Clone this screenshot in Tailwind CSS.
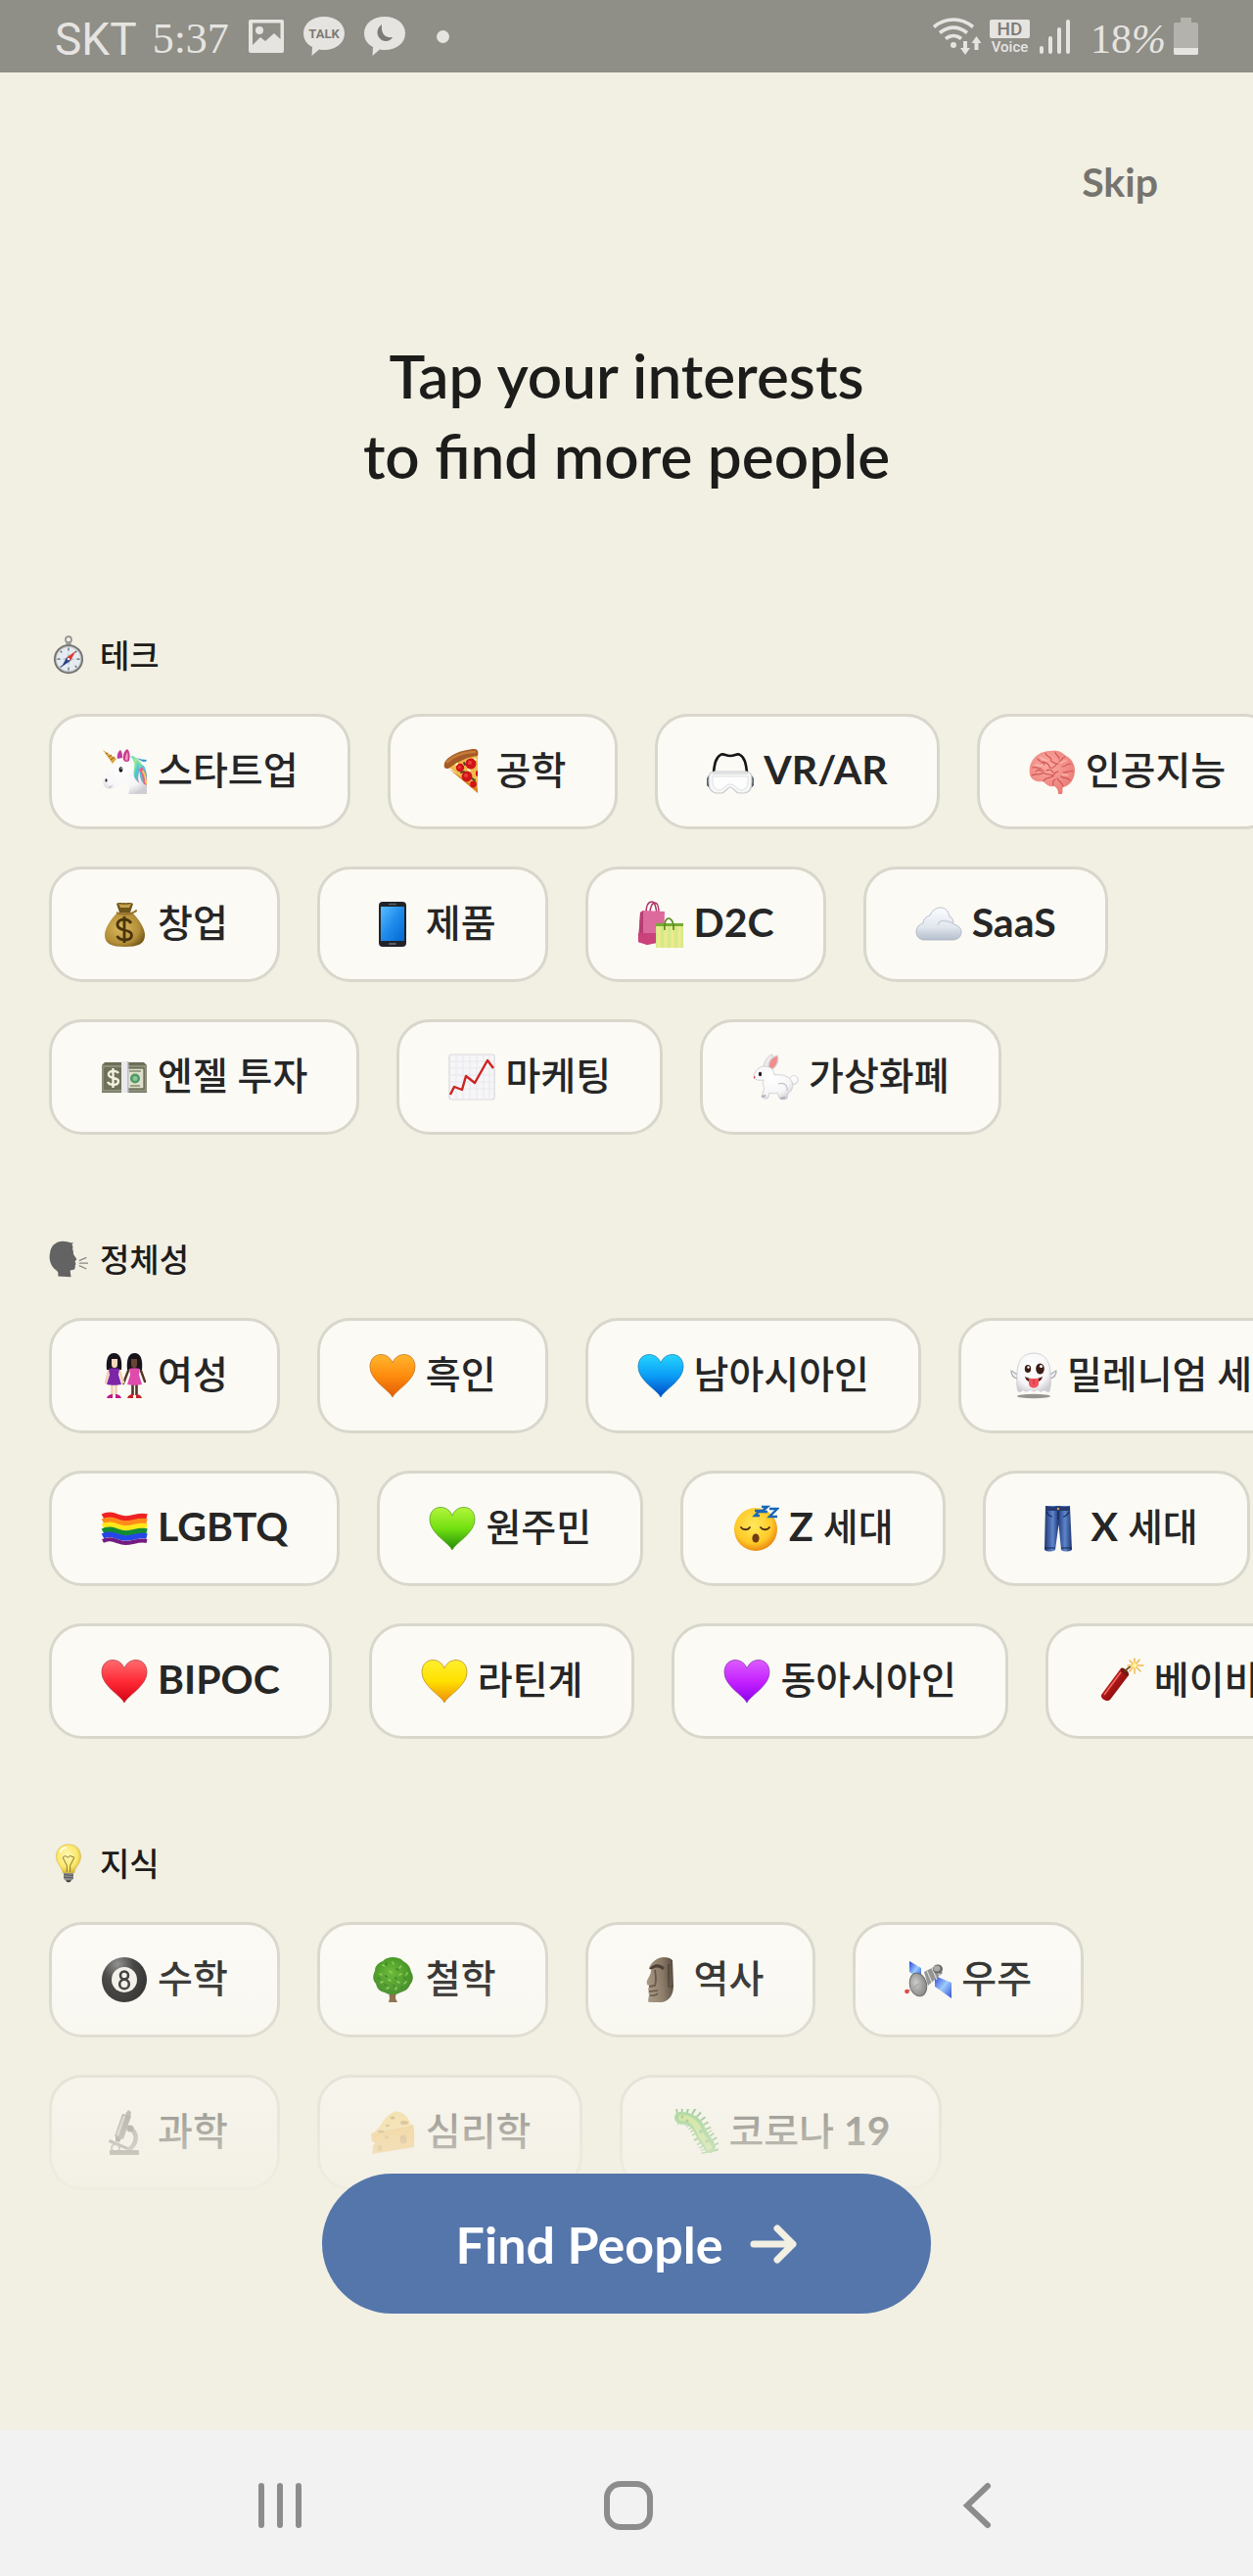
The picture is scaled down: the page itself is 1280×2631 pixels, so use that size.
<!DOCTYPE html>
<html lang="ko">
<head>
    <meta charset="UTF-8">
    <meta name="viewport" content="width=device-width, initial-scale=1.0">
    <title>Tap your interests</title>
    <script src="https://cdn.jsdelivr.net/npm/@tailwindcss/browser@4"></script>
    <style>
        body {
            font-family: 'Lato', 'Noto Sans CJK KR', sans-serif;
        }
    </style>
</head>
<body class="flex min-h-screen flex-col bg-[#f2efe3] text-[#1c1c1a]">

    <!-- 이모지 모음 -->
    <svg class="absolute h-0 w-0" aria-hidden="true">
        <defs>
            <linearGradient id="g-orange" x1="0" y1="0" x2="0" y2="1"><stop offset="0" stop-color="#ffb52e"/><stop offset=".5" stop-color="#ff8c0d"/><stop offset="1" stop-color="#e05a06"/></linearGradient>
            <linearGradient id="g-blue" x1="0" y1="0" x2="0" y2="1"><stop offset="0" stop-color="#25d4ff"/><stop offset=".5" stop-color="#0a9df5"/><stop offset="1" stop-color="#0547c4"/></linearGradient>
            <linearGradient id="g-green" x1="0" y1="0" x2="0" y2="1"><stop offset="0" stop-color="#b4f53c"/><stop offset=".5" stop-color="#72e010"/><stop offset="1" stop-color="#1f8a0c"/></linearGradient>
            <linearGradient id="g-red" x1="0" y1="0" x2="0" y2="1"><stop offset="0" stop-color="#ff6b6e"/><stop offset=".5" stop-color="#ff2b36"/><stop offset="1" stop-color="#d60012"/></linearGradient>
            <linearGradient id="g-yellow" x1="0" y1="0" x2="0" y2="1"><stop offset="0" stop-color="#fff02e"/><stop offset=".5" stop-color="#ffe000"/><stop offset="1" stop-color="#f08c0a"/></linearGradient>
            <linearGradient id="g-purple" x1="0" y1="0" x2="0" y2="1"><stop offset="0" stop-color="#dc5cff"/><stop offset=".5" stop-color="#c522ff"/><stop offset="1" stop-color="#8a00ee"/></linearGradient>
            <linearGradient id="g-phone" x1="0" y1="0" x2="1" y2="1"><stop offset="0" stop-color="#5bbcff"/><stop offset=".5" stop-color="#1f8cec"/><stop offset="1" stop-color="#0367cf"/></linearGradient>
            <linearGradient id="g-cloud" x1="0" y1="0" x2="0" y2="1"><stop offset="0" stop-color="#fbfcfe"/><stop offset=".6" stop-color="#e2e7ef"/><stop offset="1" stop-color="#b4becb"/></linearGradient>
            <linearGradient id="g-mane" x1="0" y1="0" x2="1" y2="1"><stop offset="0" stop-color="#5bd8d8"/><stop offset=".35" stop-color="#a4e88e"/><stop offset=".6" stop-color="#45c8d8"/><stop offset="1" stop-color="#f0789c"/></linearGradient>
            <linearGradient id="g-jeans" x1="0" y1="0" x2="1" y2="0"><stop offset="0" stop-color="#20366f"/><stop offset=".3" stop-color="#5d86cc"/><stop offset=".5" stop-color="#233c7c"/><stop offset=".75" stop-color="#5d86cc"/><stop offset="1" stop-color="#20366f"/></linearGradient>
            <linearGradient id="g-tube" x1="0" y1="0" x2="1" y2="1"><stop offset="0" stop-color="#e03a32"/><stop offset=".5" stop-color="#a81415"/><stop offset="1" stop-color="#5c0a08"/></linearGradient>
            <linearGradient id="g-panel" x1="0" y1="0" x2="1" y2="1"><stop offset="0" stop-color="#1b2fe0"/><stop offset=".5" stop-color="#8ec8ff"/><stop offset="1" stop-color="#1533d8"/></linearGradient>
            <linearGradient id="g-stone" x1="0" y1="0" x2="1" y2="0"><stop offset="0" stop-color="#a08e78"/><stop offset=".6" stop-color="#7d6b58"/><stop offset="1" stop-color="#473b2f"/></linearGradient>
            <radialGradient id="g-white" cx=".45" cy=".35" r=".7"><stop offset="0" stop-color="#ffffff"/><stop offset=".7" stop-color="#f6f5f7"/><stop offset="1" stop-color="#cfced4"/></radialGradient>
            <radialGradient id="g-brain" cx=".4" cy=".35" r=".8"><stop offset="0" stop-color="#fba9a2"/><stop offset="1" stop-color="#e8746f"/></radialGradient>
            <radialGradient id="g-gold" cx=".4" cy=".45" r=".65"><stop offset="0" stop-color="#dcb95c"/><stop offset=".7" stop-color="#b28e38"/><stop offset="1" stop-color="#775a19"/></radialGradient>
            <radialGradient id="g-face" cx=".45" cy=".4" r=".6"><stop offset="0" stop-color="#ffe95a"/><stop offset=".7" stop-color="#ffc928"/><stop offset="1" stop-color="#ea8b12"/></radialGradient>
            <radialGradient id="g-ball" cx=".35" cy=".15" r=".9"><stop offset="0" stop-color="#8a8a8a"/><stop offset=".4" stop-color="#3a3a3a"/><stop offset="1" stop-color="#141414"/></radialGradient>
            <radialGradient id="g-bulb" cx=".45" cy=".4" r=".6"><stop offset="0" stop-color="#fff9b8"/><stop offset=".7" stop-color="#fbe768"/><stop offset="1" stop-color="#d9b93e"/></radialGradient>
            <radialGradient id="g-leaf" cx=".45" cy=".4" r=".6"><stop offset="0" stop-color="#5fb52a"/><stop offset="1" stop-color="#2f8213"/></radialGradient>
            <radialGradient id="g-dish" cx=".4" cy=".4" r=".7"><stop offset="0" stop-color="#c8c8c8"/><stop offset="1" stop-color="#6d6d6d"/></radialGradient>
        </defs>

        <symbol id="compass" viewBox="0 0 48 48">
            <circle cx="24" cy="5" r="3.6" fill="none" stroke="#8f8f8f" stroke-width="2"/>
            <path d="M21 8h6v4h-6z" fill="#9a9a98"/>
            <circle cx="24" cy="29" r="18" fill="#6f6f6d"/>
            <circle cx="24" cy="29" r="16" fill="#b9bcbe"/>
            <circle cx="24" cy="29" r="14.6" fill="#e4ebf1"/>
            <path d="M24 15v4M24 39v4M10 29h4M34 29h4M14 19l2 2M34 19l-2 2M14 39l2-2M34 39l-2-2" stroke="#5b6570" stroke-width="1.4"/>
            <path d="M24 21l2 6 6 2-6 2-2 6-2-6-6-2 6-2z" fill="#b8c4ce"/>
            <path d="M33 19l-6.500 12-4.500-4z" fill="#d93830"/>
            <path d="M15 39l6.800-12 4.700 4z" fill="#2c3f87"/>
            <circle cx="24" cy="29" r="1.400" fill="#fff"/>
        </symbol>

        <symbol id="unicorn" viewBox="0 0 48 48">
            <path d="M26 8c6-1 13 3 16 9 3 1 4 5 5 10v17h-3c-2-7-9-12-11-18z" fill="url(#g-mane)"/>
            <path d="M36 10c4 1 7 2 11 2l-1 2c-2 0-4 0-5-1z" fill="#3c9bd0"/>
            <path d="M42 19c4 6 5 15 5 23l-3-2c0-8-2-13-5-18z" fill="#e85f8c"/>
            <path d="M43 22c3 5 4 10 4 16l-2-3c0-5-1-8-3-11z" fill="#f5d34f"/>
            <path d="M14 12c5-4 12-6 17-3 7 4 8 13 9 20 1 5 3 8 7 9v9H28c2-5 1-9-3-11-4 0-7 2-10 4-4 3-10 2-12-2-2-5 1-9 4-13 2-5 3-9 7-13z" fill="url(#g-white)"/>
            <path d="M33 8c4 2 6 7 6 12 1 7-3 10 1 16-7-4-7-10-6-15 1-6-1-9-3-12z" fill="url(#g-mane)"/>
            <path d="M17 11c-1-4 1-8 3-9 2 2 2 5 2 8z" fill="#c23ba0"/>
            <path d="M23 12c-1-5 1-9 4-11 3 3 3 8 2 12-2 2-5 1-6-1z" fill="#c83e8c"/>
            <path d="M25 12c0-4 1-6 2-8 1 3 1 6 0 9z" fill="#f59cc0"/>
            <path d="M2 2l14 9-4 5z" fill="#d9a441"/>
            <path d="M5 6l2-1M8 9l3-2M10 12l4-3" stroke="#8f621a" stroke-width="1"/>
            <ellipse cx="20.500" cy="22" rx="1.900" ry="2.800" fill="#1d1512"/>
            <circle cx="21" cy="21" r=".8" fill="#fff"/>
            <ellipse cx="5.500" cy="33" rx="1.100" ry="1.700" fill="#332a2e"/>
            <path d="M8 40c2 0 3-1 4-2" stroke="#b9a9bd" stroke-width="1" fill="none"/>
        </symbol>

        <symbol id="pizza" viewBox="0 0 48 48">
            <path d="M8 18L39 6v40z" fill="#f0bb4a"/>
            <path d="M9 21l30 25v-5z" fill="#d88a28"/>
            <path d="M5 20C4 15 6 12 12 8 20 3 30 1 36 1c3 0 4 3 3 7-9 1-19 5-27 11-2 2-5 3-7 1z" fill="#a55b26"/>
            <path d="M8 14C16 7 26 4 36 4" fill="none" stroke="#c47c3d" stroke-width="2.500" stroke-linecap="round"/>
            <circle cx="32" cy="16" r="5.500" fill="#d0141a"/><circle cx="21" cy="20" r="4.200" fill="#d0141a"/><circle cx="28" cy="29" r="5.400" fill="#cf1519"/><circle cx="34.500" cy="37" r="3.400" fill="#cf1519"/>
            <path d="M37 24l2-1v6l-2-1z" fill="#cf1519"/>
            <circle cx="31" cy="15" r="2" fill="#e8443a"/><circle cx="27" cy="28" r="2" fill="#e8443a"/><circle cx="20.500" cy="19.500" r="1.500" fill="#e8443a"/>
            <path d="M22 25l3-1M33 31l3 2M26 17l-1-2" stroke="#4a3a20" stroke-width="1.800" stroke-linecap="round"/>
            <path d="M29 22l2 1M17 17l1-1M36 11l1 1" stroke="#fdf0b8" stroke-width="2" stroke-linecap="round"/>
        </symbol>

        <symbol id="goggles" viewBox="0 0 48 48">
            <path d="M7 25C8 16 9 10 14 7c3-2 5 1 10 1s7-3 10-1c5 3 6 9 7 18" fill="none" stroke="#151515" stroke-width="2.600" stroke-linecap="round"/>
            <path d="M3 28l-2 3v7l3 3M45 28l2 3v7l-3 3" fill="#2a363f" stroke="#24303a" stroke-width="1.500"/>
            <path d="M8 24h32c4 0 6 3 6 7v4c0 6-2 10-7 11h-6c-4 0-6-6-9-6s-5 6-9 6H9c-5-1-7-5-7-11v-4c0-4 2-7 6-7z" fill="#f5f6f6" stroke="#c7cacc" stroke-width="1.200"/>
            <path d="M6 29h36v5c0 5-2 8-6 9-5 0-7-6-12-6s-7 6-12 6c-4-1-6-4-6-9z" fill="#fdfdfd" stroke="#e0e2e3" stroke-width="1"/>
            <path d="M6 26h36" stroke="#d8dadb" stroke-width="1.500"/>
        </symbol>

        <symbol id="brain" viewBox="0 0 48 48">
            <path d="M1 27C-1 14 8 3 22 3c7-2 13 2 16 5 6 3 9 9 9 15 0 8-5 16-12 17-1 1 0 4-1 7h-4c0-4-1-6-4-8-5 1-8-1-11-5-5 1-12 0-14-7z" fill="url(#g-brain)"/>
            <path d="M4 20c4-2 5 2 9 1M9 11c2 4 6 2 7 6M17 5c0 4 5 3 6 7M27 4c0 4 4 3 4 7M37 9c-4 1-3 4-6 5M43 16c-5 0-5 3-9 3M45 24c-4-2-7 2-10 1M42 33c-3-4-6-1-9-4M35 39c-1-4-4-4-6-8M3 28c4-3 8 1 12-3 3 4 8 0 10 4M15 34c1-4 6-3 9-5 2-1 2-5 6-5M13 15c3-2 7 1 8 4s5 1 7-2M22 13c3 1 4 4 8 3M18 23c3-2 6 0 7 2M25 38c-1-3 0-5 2-6M7 24c2-3 5 0 8-1" fill="none" stroke="#cf5753" stroke-width="1.200" stroke-linecap="round"/>
            <path d="M6 18c3-2 5 1 7 0M11 9c2 3 5 2 7 4M38 13c-3 0-4 2-6 2M40 28c-3-1-4-1-6-1" fill="none" stroke="#ffc9c3" stroke-width="1" stroke-linecap="round"/>
        </symbol>

        <symbol id="moneybag" viewBox="0 0 48 48">
            <path d="M16 3c3-2 5 0 8-1 3 1 6-1 9 1l-3 9H19z" fill="#6f541a"/>
            <path d="M18 3c2 1 10 1 13 0l-2 4h-9z" fill="#c3a14c"/>
            <path d="M17 12h15c7 7 13 16 13 23 0 9-7 12-20.500 12S4 44 4 35c0-7 6-16 13-23z" fill="url(#g-gold)"/>
            <path d="M16 11c4 2 12 2 17 0l3-2c2 0 1 3-1 3-6 4-14 3-19 1z" fill="#94722a"/>
            <path d="M31 23c-2-3-5-4-7-4-4 0-7 2-7 5.500 0 7 14.500 4 14.500 10.500 0 3.500-3 5-7 5-3 0-6-1-8-4M24 16v27" fill="none" stroke="#49340c" stroke-width="2.800"/>
        </symbol>

        <symbol id="phone" viewBox="0 0 48 48">
            <rect x="10" y="1" width="28" height="46" rx="4" fill="#20242a"/>
            <rect x="12" y="6" width="24" height="35" fill="url(#g-phone)"/>
            <path d="M20 3.500h8" stroke="#59616b" stroke-width="1.400"/>
            <rect x="20" y="43" width="8" height="2" rx="1" fill="#59616b"/>
        </symbol>

        <symbol id="bags" viewBox="0 0 48 48">
            <path d="M9 13c0-7 2-12 6-12 3 0 4 5 5 12M13 13c0-6 2-11 5-11s4 5 4 11" fill="none" stroke="#b03565" stroke-width="1.500"/>
            <path d="M3 12l3-2 22 1-1 31-17 3-9-3z" fill="#dd6a9c"/>
            <path d="M3 12l3-2v33l-5-1z" fill="#b83c74"/>
            <path d="M1 33h26v8l-17 4-9-3z" fill="#c9427a"/>
            <rect x="19" y="23" width="28" height="25" fill="#d3ea8b"/>
            <path d="M22 23v25M29 23v25M36 23v25M43 23v25" stroke="#f1e98d" stroke-width="3"/>
            <path d="M19 23h28v3H19z" fill="#74ab34"/>
            <path d="M28 30c-1-7 1-12 4-12s6 5 5 12" fill="none" stroke="#5a8d22" stroke-width="1.700"/>
        </symbol>

        <symbol id="cloud" viewBox="0 0 48 48">
            <path d="M9 40C4 40 1 36 1 32c0-5 3-8 7-9 0-4 3-7 7-8 2-5 6-8 11-8s8 4 9 9c3 1 4 4 4 8 5 1 8 4 8 8 0 5-4 8-9 8z" fill="url(#g-cloud)" stroke="#a8b2bf" stroke-width=".8"/>
            <path d="M23 25c1-4 5-6 9-4 3 1 4 0 6 2" fill="none" stroke="#c9d1dc" stroke-width="1.500"/>
        </symbol>

        <symbol id="cash" viewBox="0 0 48 48">
            <path d="M1 12l3-3h40l3 3v28H1z" fill="#6d6e56"/>
            <rect x="1" y="12" width="46" height="27" fill="#8d907a"/>
            <rect x="4" y="15" width="40" height="21" fill="#dfe0cb" stroke="#5c5f48" stroke-width="1.200"/>
            <path d="M4 15h17v21H4z" fill="#6f7258"/>
            <path d="M18 20c-2-3-11-3-10 2 1 4 9 2 10 6 0 5-9 5-11 1M12.500 15v20" stroke="#f3f1df" stroke-width="2.400" fill="none"/>
            <circle cx="35" cy="25.500" r="5" fill="#4d9a66"/><circle cx="35" cy="25.500" r="2.500" fill="#8cc49b"/>
            <path d="M29 18h12M30 33h10" stroke="#858a70" stroke-width="1.500"/>
            <rect x="21" y="8" width="7" height="32" fill="#e9e9ee"/>
            <path d="M27 8h1.500v32H27z" fill="#bebfc8"/>
        </symbol>

        <symbol id="chart" viewBox="0 0 48 48">
            <rect x="1" y="1" width="46" height="46" rx="2" fill="#f6f6f8" stroke="#d9d9de" stroke-width="1.200"/>
            <path d="M1 8h46M1 15h46M1 22h46M1 29h46M1 36h46M8 1v46M15 1v46M22 1v46M29 1v46M36 1v46M42 1v46" stroke="#e6e6eb" stroke-width=".8"/>
            <path d="M2 42l4-8 8 3 4-14 9 7L40 7l6 8" fill="none" stroke="#cc2420" stroke-width="2.400" stroke-linejoin="round"/>
        </symbol>

        <symbol id="rabbit" viewBox="0 0 48 48">
            <circle cx="43" cy="27" r="4.500" fill="url(#g-white)" stroke="#cfcdd0" stroke-width=".7"/>
            <path d="M12 13c1-6 5-11 9-12 2 4 1 11-3 15z" fill="#eceaec" stroke="#c4c2c6" stroke-width=".7"/>
            <path d="M17 14c0-6 3-10 9-12 2 4 0 11-5 14z" fill="#f38c8e" stroke="#d4d0d3" stroke-width="1.200"/>
            <path d="M2 23c1-6 6-10 11-10 6 0 10 4 10 9 6-1 13 0 17 5 4 6 1 11-3 14l-1 5c-3 2-7 1-8-1l-2-5c-3 1-6 1-8 0l-1 5c-2 2-6 1-7-1l3-9c-2-2-2-5-1-8-5 1-10 0-10-4z" fill="url(#g-white)" stroke="#cbc9cd" stroke-width=".8"/>
            <path d="M27 31c5-2 10 1 9 7" fill="none" stroke="#c6c3c8" stroke-width="1.200"/>
            <path d="M10 44l4-1M29 46l5-1" stroke="#aaa6ac" stroke-width="1.600"/>
            <ellipse cx="8.500" cy="21" rx="1.600" ry="2.200" fill="#201a1a"/>
            <path d="M2 23l2 1-2 2z" fill="#d9474a"/>
        </symbol>

        <symbol id="speaking" viewBox="0 0 48 48">
            <path d="M28 6c2 2 1 4 1 6 1 2 1 4 1 6l4 6c0 2-2 1-2 3l1 3-1 2c1 6-3 5-6 6l1 8-16-1c1-4 0-6-3-8C2 32 0 25 1 18 2 7 9 2 17 2c5 0 8 2 13 2z" fill="#636363"/>
            <path d="M37 26l9-4M37 29h11M37 32l9 4" stroke="#8b8a85" stroke-width="1.500"/>
        </symbol>

        <symbol id="women" viewBox="0 0 48 48">
            <path d="M28 19l-5 13M41 19l4 11" fill="none" stroke-width="2.400" stroke-linecap="round" stroke="#553526"/>
            <path d="M8 19L5 31M19 19l4 12" fill="none" stroke-width="2.400" stroke-linecap="round" stroke="#f3cdb0"/>
            <path d="M11.500 31v13M15.500 31v13" stroke="#f3cdb0" stroke-width="2.600"/>
            <path d="M32.500 31v13M36.500 31v13" stroke="#553526" stroke-width="2.600"/>
            <path d="M6 18C5 8 7 1 13.500 1S22 8 21 18z" fill="#17141c"/>
            <path d="M27 18c-1-10 1-17 7.500-17S43 8 42 18z" fill="#17141c"/>
            <path d="M11 7h6v5c0 3-1 4-3 4s-3-1-3-4z" fill="#f8d8bd"/>
            <path d="M31 7h6v5c0 3-1 4-3 4s-3-1-3-4z" fill="#6a4433"/>
            <path d="M8 17c4-1 7-1 11 0l-1 6 3 10c-4 1-11 1-15 0l3-10z" fill="#7d25a8"/>
            <path d="M29 17c4-1 7-1 11 0l-1 6 3 10c-4 1-11 1-15 0l3-10z" fill="#e04bac"/>
            <path d="M6 47c1-3 3-4 6-4v4zM15 43c3 0 5 1 6 4h-6z" fill="#c0188a"/>
            <path d="M27 47c1-3 3-4 6-4v4zM36 43c3 0 5 1 6 4h-6z" fill="#c2222a"/>
        </symbol>

        <!-- 하트는 색만 다르다 -->
        <path id="heart-shape" d="M24 46C21 39 1 29 1 15 1 7 6 2.500 12 2.500c6 0 10 3.500 12 8.500 2-5 6-8.500 12-8.500 6 0 11 4.500 11 12.500 0 14-20 24-23 31z"/>
        <symbol id="heart-orange" viewBox="0 0 48 48"><use href="#heart-shape" fill="url(#g-orange)" stroke="#c9741e" stroke-width=".8"/></symbol>
        <symbol id="heart-blue" viewBox="0 0 48 48"><use href="#heart-shape" fill="url(#g-blue)" stroke="#1a82b8" stroke-width=".8"/></symbol>
        <symbol id="heart-green" viewBox="0 0 48 48"><use href="#heart-shape" fill="url(#g-green)" stroke="#5da024" stroke-width=".8"/></symbol>
        <symbol id="heart-red" viewBox="0 0 48 48"><use href="#heart-shape" fill="url(#g-red)" stroke="#b84044" stroke-width=".8"/></symbol>
        <symbol id="heart-yellow" viewBox="0 0 48 48"><use href="#heart-shape" fill="url(#g-yellow)" stroke="#c0922c" stroke-width=".8"/></symbol>
        <symbol id="heart-purple" viewBox="0 0 48 48"><use href="#heart-shape" fill="url(#g-purple)" stroke="#8c3cb4" stroke-width=".8"/></symbol>

        <symbol id="ghost" viewBox="0 0 48 48">
            <ellipse cx="24" cy="45" rx="17" ry="2.200" fill="#96948f"/>
            <path d="M7 27c-4-1-6-4-6-8 2 0 3 3 7 4zM41 27c4-1 6-4 6-8-2 0-3 3-7 4z" fill="#eeedf0" stroke="#a9a8ae" stroke-width="1.200"/>
            <path d="M8 40c-2-6-1-12-1-18C7 9 13 1 24 1s17 8 17 21c0 6 1 12-1 18-3 2-4-2-6-1s-3 2-5 0-3 1-5 1-3-3-5-1-3 1-5 0-3 3-6 1z" fill="url(#g-white)" stroke="#c9c7ce" stroke-width=".8"/>
            <ellipse cx="18" cy="17" rx="3.200" ry="4" fill="#3a1d16"/><ellipse cx="30.500" cy="17" rx="4.300" ry="5.600" fill="#3a1d16"/>
            <circle cx="18.500" cy="15.500" r="1.200" fill="#fff"/><circle cx="31.500" cy="14.500" r="1.600" fill="#fff"/>
            <path d="M15 25c6 3 12 3 18 0-1 4-4 6-9 6s-8-2-9-6z" fill="#542018"/>
            <path d="M19 27h10v5c0 6-10 6-10 0z" fill="#f0535c"/><path d="M24 28v5" stroke="#c8303c" stroke-width="1"/>
        </symbol>

        <symbol id="flag" viewBox="0 0 48 48">
            <g fill="none" stroke-width="5.600">
                <path d="M2 12c9-5 15 2 23 2s14-4 22-2" stroke="#ee2222"/>
                <path d="M2 17c9-5 15 2 23 2s14-4 22-2" stroke="#ff8c1a"/>
                <path d="M2 22c9-5 15 2 23 2s14-4 22-2" stroke="#ffe71a"/>
                <path d="M2 27c9-5 15 2 23 2s14-4 22-2" stroke="#138a34"/>
                <path d="M2 32c9-5 15 2 23 2s14-4 22-2" stroke="#2647e8"/>
                <path d="M2 37c9-5 15 2 23 2s14-4 22-2" stroke="#741a80" stroke-width="4"/>
            </g>
        </symbol>

        <symbol id="sleeping" viewBox="0 0 48 48">
            <circle cx="24" cy="25" r="22" fill="url(#g-face)"/>
            <path d="M9 23c2 3 7 3 9 0M29 23c2 3 7 3 9 0" fill="none" stroke="#4d2b0e" stroke-width="1.800" stroke-linecap="round"/>
            <ellipse cx="24" cy="34" rx="3.600" ry="4.600" fill="#6d3a12"/>
            <path d="M23 6h5l-5 5h5M30 2h6l-6 5h6M38 4h8l-8 8h8" fill="none" stroke="#1767b5" stroke-width="2.400"/>
        </symbol>

        <symbol id="jeans" viewBox="0 0 48 48">
            <path d="M11 1h25l2 45c-3 2-8 2-11 0L24.500 20 21 46c-3 2-8 2-11 0z" fill="url(#g-jeans)"/>
            <path d="M11 2h25v4H11z" fill="#263a70"/>
            <path d="M24 6v9M12 7c2 4 4 5 6 5M35 7c-2 4-4 5-6 5M10 44h11M27 44h11" fill="none" stroke="#17264f" stroke-width="1.100"/>
            <circle cx="24" cy="4" r="1.200" fill="#d2a04a"/>
        </symbol>

        <symbol id="dynamite" viewBox="0 0 48 48">
            <path d="M24 11l8 7L13 43c-3 3-10-1-9-5z" fill="url(#g-tube)"/>
            <path d="M24 11c2-2 9 3 8 7-2 2-9-4-8-7z" fill="#6d1b10"/>
            <path d="M28 14c2-2 4-4 6-5" stroke="#6a4a20" stroke-width="1.800" fill="none"/>
            <path d="M24 15L7 38" stroke="#ef6c60" stroke-width="1.500"/>
            <circle cx="38" cy="8" r="3.500" fill="#fff2a8"/>
            <path d="M38 1v4M38 11v5M31 8h4M41 8h6M33 3l3 3M40 10l4 4M43 2l-3 4M33 14l3-4" stroke="#f2b94a" stroke-width="1.500" stroke-linecap="round"/>
        </symbol>

        <symbol id="bulb" viewBox="0 0 48 48">
            <path d="M24 1c10 0 15 7 15 15 0 9-7 12-8 20H17c-1-8-8-11-8-20C9 8 14 1 24 1z" fill="url(#g-bulb)" stroke="#d4b84c" stroke-width=".8"/>
            <path d="M17 17l5 10v8M31 17l-5 10v8M17 17l3-2 3 2 3-2 5 2" fill="none" stroke="#8a7730" stroke-width="1.200"/>
            <path d="M18 36h12v7l-3 3c-2 1-4 1-6 0l-3-3z" fill="#8d8d8d"/>
            <path d="M18 38l12 1M18 41l12 1" stroke="#565656" stroke-width="1.200"/>
            <path d="M21 45h6l-1 2h-4z" fill="#333"/>
            <path d="M14 10c1-3 4-5 7-5" stroke="#fffde4" stroke-width="2.500" fill="none" stroke-linecap="round"/>
        </symbol>

        <symbol id="eightball" viewBox="0 0 48 48">
            <circle cx="24" cy="24" r="23" fill="url(#g-ball)"/>
            <circle cx="24" cy="24" r="13" fill="#f3f1ea"/>
            <circle cx="24" cy="19.500" r="4" fill="none" stroke="#303030" stroke-width="2.600"/>
            <circle cx="24" cy="28.500" r="4.800" fill="none" stroke="#303030" stroke-width="2.600"/>
        </symbol>

        <symbol id="tree" viewBox="0 0 48 48">
            <path d="M20 34h8l-1 9 2 4h-9l1-4z" fill="#7d5a35"/>
            <path d="M24 1c5 0 8 1 11 4 5 3 7 6 8 11 3 5 2 9-1 13-2 5-6 7-10 8-5 3-11 3-16 0-5-1-8-4-9-9-4-4-3-9-1-13 0-5 3-8 8-10 3-3 6-4 10-4z" fill="url(#g-leaf)"/>
            <path d="M14 9l2 1M24 6l1 2M33 10l-2 2M11 18l2 1M21 15l2 2M31 19l2-1M39 17l-1 2M12 27l2-1M20 24l2 1M29 26l2 1M38 26l-2 2M18 33l2-1M27 34l1-2" stroke="#84cc46" stroke-width="1.600" stroke-linecap="round"/>
            <path d="M18 7l-1 2M28 13l2 1M9 22l2 1M17 20l1 1M27 22l1 1M36 22l1 1M16 29l2 1M25 30l1 1M33 32l1-1" stroke="#2f8213" stroke-width="1.800" stroke-linecap="round"/>
        </symbol>

        <symbol id="moai" viewBox="0 0 48 48">
            <path d="M12 12c3-7 9-11 15-11 4 0 7 1 9 3l1 26c0 9-4 16-12 17H12c-2-1 0-5 0-8-1-2 0-4-1-6l2-3c-3 0-4-2-3-5 2-5 4-6 4-11z" fill="url(#g-stone)"/>
            <path d="M12 13c5-6 11-6 16-1l-2 2c-4-3-7-3-10-1z" fill="#3d3024"/>
            <path d="M18 14c1 6 2 11 0 16l-6 1" fill="none" stroke="#564638" stroke-width="1.800"/>
            <path d="M12 36l9-1M13 40c4 1 6 0 8-2" fill="none" stroke="#4d3f31" stroke-width="1.500"/>
            <path d="M32 8v22c0 2 4 2 4-1" fill="none" stroke="#45382d" stroke-width="1.800"/>
        </symbol>

        <symbol id="satellite" viewBox="0 0 48 48">
            <path d="M5 5l12 7v12L5 16z" fill="url(#g-panel)"/>
            <path d="M31 20l17 7v16L31 31z" fill="url(#g-panel)"/>
            <path d="M20 16l14-7 5 8-15 13z" fill="#8b8b8b"/>
            <path d="M23 15l5 12M28 12l5 12M32 10l4 10" stroke="#d5d5d5" stroke-width="1.200"/>
            <ellipse cx="34" cy="13" rx="5" ry="4.500" fill="#5c5c5c"/><ellipse cx="33" cy="12.500" rx="3.500" ry="3" fill="#a4a4a4"/>
            <ellipse cx="14" cy="29" rx="8.500" ry="12" transform="rotate(-14 14 29)" fill="url(#g-dish)" stroke="#5b5b5b" stroke-width="1"/>
            <path d="M15 28L3 36" stroke="#9c9c9c" stroke-width="1.300"/><circle cx="2.500" cy="36" r="2.300" fill="#d8322c"/>
        </symbol>

        <symbol id="microscope" viewBox="0 0 48 48">
            <path d="M25 5l3-4 3 2-1 5z" fill="#777"/>
            <path d="M22 5l9 2-8 24-9-3z" fill="#666"/>
            <path d="M24 7l-7 20" stroke="#b5b5b5" stroke-width="2.500"/>
            <path d="M15 28l6 2-2 4-4-1z" fill="#444"/>
            <path d="M29 19c10 6 8 17-1 23" fill="none" stroke="#777" stroke-width="4.500"/>
            <circle cx="30" cy="20" r="3.500" fill="#505050"/>
            <path d="M9 31l19 8-1 3-19-8z" fill="#606060"/>
            <circle cx="15" cy="40" r="4" fill="none" stroke="#777" stroke-width="2"/>
            <rect x="9" y="42" width="30" height="5" rx="1" fill="#4c4c4c"/>
        </symbol>

        <symbol id="cheese" viewBox="0 0 48 48">
            <path d="M2 25C13 20 13 9 25 3c7-2 15 4 18 13z" fill="#f5cf6a"/>
            <path d="M2 25l43-9c2 8 1 15 1 23L3 46c2-6 0-6 1-9 3-1 3-3-1-4z" fill="#f3b23c"/>
            <ellipse cx="12" cy="23" rx="3.500" ry="1.600" fill="#b97e24"/><ellipse cx="36" cy="14" rx="4" ry="2" fill="#b97e24"/><ellipse cx="19" cy="17" rx="2" ry="1.300" fill="#b97e24"/><ellipse cx="24" cy="9" rx="2.500" ry="1.500" fill="#b97e24"/>
            <ellipse cx="35" cy="31" rx="3.500" ry="4.500" fill="#c2832a"/><ellipse cx="11" cy="40" rx="2.500" ry="3" fill="#c2832a"/><circle cx="18" cy="29" r="1.800" fill="#c2832a"/>
        </symbol>

        <symbol id="microbe" viewBox="0 0 48 48">
            <path d="M5 6C20 4 27 14 31 24c2 6 8 10 10 20" fill="none" stroke="#3c9e3c" stroke-width="21" stroke-dasharray="1.600 3"/>
            <path d="M9 9C21 9 27 16 30 24c2 6 7 9 9 15" fill="none" stroke="#4fb848" stroke-width="12" stroke-linecap="round"/>
            <path d="M10 9C20 9 26 16 29 24c2 6 7 9 9 15" fill="none" stroke="#a2dc50" stroke-width="6" stroke-linecap="round"/>
            <circle cx="11" cy="8" r="1.500" fill="#5a8a20"/><circle cx="16" cy="12" r="1.500" fill="#5a8a20"/><circle cx="30" cy="23" r="2" fill="#4aa85a"/><circle cx="36" cy="33" r="1.800" fill="#4aa85a"/>
        </symbol>
    </svg>

    <!-- 상태 표시줄 -->
    <header class="flex h-[74px] items-center justify-between bg-[#8f8e87] px-14 text-[#e6e4e1]">
        <div class="flex items-center gap-5">
            <div class="flex items-center gap-4 pt-1.5">
                <span class="font-['Roboto'] text-[46px] leading-none">SKT</span>
                <span class="font-['Liberation_Serif'] text-[44px] leading-none">5:37</span>
            </div>
            <svg class="h-9 w-9" viewBox="0 0 36 36" role="img" aria-label="사진">
                <path fill="currentColor" fill-rule="evenodd" d="M2 1h32q2 0 2 2v30q0 2-2 2H2q-2 0-2-2V3q0-2 2-2zM4 4.500V27l8-8 5 4 9-8 6.500 6V4.500z"/>
                <circle cx="11" cy="12" r="4" fill="currentColor"/>
            </svg>
            <svg class="h-10 w-[42px]" viewBox="0 0 42 40" role="img" aria-label="카카오톡">
                <path fill="currentColor" d="M21 0c12 0 21 7 21 17S33 34 21 34c-2 0-3 0-5-.5L8.500 40 9 31C3 28 0 23 0 17 0 7 9 0 21 0z"/>
                <text x="21" y="22" text-anchor="middle" font-family="Roboto" font-size="13" font-weight="700" fill="#7c7b75">TALK</text>
            </svg>
            <svg class="h-10 w-[42px]" viewBox="0 0 42 40" role="img" aria-label="방해 금지">
                <path fill="currentColor" d="M21 0c12 0 21 7 21 17S33 34 21 34c-2 0-3 0-5-.5L8.500 40 9 31C3 28 0 23 0 17 0 7 9 0 21 0z"/>
                <path fill="#7c7b75" d="M18 8c-1 9 3 14 11 13-2 4-7 5-11 3-6-4-6-12 0-16z"/>
            </svg>
            <span class="ml-3 h-[13px] w-[13px] rounded-full bg-current"></span>
        </div>
        <div class="flex items-center gap-2">
            <svg class="h-[38px] w-[50px]" viewBox="0 0 50 38" role="img" aria-label="와이파이">
                <g fill="none" stroke="currentColor" stroke-width="3.600">
                    <path d="M1 9.500c12-10 28-10 40 0M7 15.500c9-7 19-7 28 0M13 21.500c5-4 11-4 16 0"/>
                </g>
                <circle cx="21" cy="28" r="3" fill="currentColor"/>
                <path fill="currentColor" d="M31 24h4v7h3l-5 7-5-7h3zM42.500 33h4v-7h3l-5-7-5 7h3z"/>
            </svg>
            <svg class="h-[38px] w-[41px]" viewBox="0 0 41 38" role="img" aria-label="HD Voice">
                <rect y="2" width="41" height="19" rx="2" fill="currentColor"/>
                <text x="20.500" y="18" text-anchor="middle" font-family="Roboto" font-size="19" font-weight="500" fill="#7c7b75">HD</text>
                <text x="20.500" y="35" text-anchor="middle" font-family="Roboto" font-size="15" font-weight="500" fill="currentColor">Voice</text>
            </svg>
            <svg class="h-[38px] w-[34px]" viewBox="0 0 34 38" role="img" aria-label="신호">
                <path d="M4 31v4M13 21v14M22 12v23M31 4v31" stroke="currentColor" stroke-width="4" stroke-linecap="round"/>
            </svg>
            <span class="ml-3 pt-1.5 font-['Liberation_Serif'] text-[42px] leading-none">18<i>%</i></span>
            <svg class="h-[38px] w-[25px]" viewBox="0 0 25 38" role="img" aria-label="배터리">
                <path fill="#b3b2ad" d="M7 0h11v5h5q2 0 2 2v29q0 2-2 2H2q-2 0-2-2V7q0-2 2-2h5z"/>
                <path fill="currentColor" d="M0 31h25v5q0 2-2 2H2q-2 0-2-2z"/>
            </svg>
        </div>
    </header>

    <main class="relative flex-1 overflow-hidden pt-[86px]">
        <div class="flex justify-end pr-[97px]">
            <button type="button" class="text-[41px] leading-[52px] font-bold text-[#75746e]">Skip</button>
        </div>

        <h1 class="mt-[130px] text-center text-[62px] leading-[82px] font-semibold">Tap your interests<br>to find more people</h1>

        <div id="interest-list" class="mt-[143px] flex flex-col gap-[107px] pb-[245px]">
            <!-- JavaScript로 관심사 생성 -->
        </div>

        <!-- 아래쪽은 흐려지면서 버튼이 떠 있다 -->
        <div class="pointer-events-none absolute inset-x-0 bottom-0 flex h-[522px] items-start justify-center bg-[linear-gradient(to_bottom,#f2efe300_0px,#f2efe31a_60px,#f2efe347_120px,#f2efe37a_150px,#f2efe3a0_205px,#f2efe3e0_275px,#f2efe3_300px)] pt-[260px]">
            <button type="button" class="pointer-events-auto flex h-[143px] w-[622px] items-center justify-center gap-7 rounded-full bg-[#5576ab] text-[52px] font-bold text-white">
                Find People
                <svg class="h-10 w-12" viewBox="0 0 48 40" fill="none" stroke="#f2efe3" stroke-width="7" stroke-linecap="round" stroke-linejoin="round" aria-hidden="true">
                    <path d="M4 20h40M28 4l16 16-16 16"/>
                </svg>
            </button>
        </div>
    </main>

    <!-- 내비게이션 바 -->
    <nav class="flex h-[149px] items-center justify-around bg-[#f2f2f2] pt-1 pr-[104px] pl-[108px] text-[#8c8c8c]">
        <button type="button" aria-label="최근 앱">
            <svg class="h-[50px] w-[50px]" viewBox="0 0 50 50" fill="none" stroke="currentColor" stroke-width="6" stroke-linecap="round"><path d="M6 5v40M25 5v40M44 5v40"/></svg>
        </button>
        <button type="button" aria-label="홈">
            <svg class="h-[50px] w-[50px]" viewBox="0 0 50 50" fill="none" stroke="currentColor" stroke-width="6"><rect x="3" y="3" width="44" height="44" rx="14"/></svg>
        </button>
        <button type="button" aria-label="뒤로">
            <svg class="h-[50px] w-[50px]" viewBox="0 0 50 50" fill="none" stroke="currentColor" stroke-width="6" stroke-linecap="round" stroke-linejoin="miter"><path d="M36 5L15 25l21 20"/></svg>
        </button>
    </nav>

    <script>
        const sections = [
            {
                icon: "compass", title: "테크",
                rows: [
                    [["unicorn", "스타트업"], ["pizza", "공학"], ["goggles", "VR/AR"], ["brain", "인공지능"]],
                    [["moneybag", "창업"], ["phone", "제품"], ["bags", "D2C"], ["cloud", "SaaS"]],
                    [["cash", "엔젤 투자"], ["chart", "마케팅"], ["rabbit", "가상화폐"]]
                ]
            },
            {
                icon: "speaking", title: "정체성",
                rows: [
                    [["women", "여성"], ["heart-orange", "흑인"], ["heart-blue", "남아시아인"], ["ghost", "밀레니엄 세대"]],
                    [["flag", "LGBTQ"], ["heart-green", "원주민"], ["sleeping", "Z 세대"], ["jeans", "X 세대"]],
                    [["heart-red", "BIPOC"], ["heart-yellow", "라틴계"], ["heart-purple", "동아시아인"], ["dynamite", "베이비 부머"]]
                ]
            },
            {
                icon: "bulb", title: "지식",
                rows: [
                    [["eightball", "수학"], ["tree", "철학"], ["moai", "역사"], ["satellite", "우주"]],
                    [["microscope", "과학"], ["cheese", "심리학"], ["microbe", "코로나 19"]]
                ]
            }
        ];

        const list = document.getElementById('interest-list');

        // 영문과 숫자는 한글보다 조금 크고 굵게
        function formatLabel(label) {
            return label.replace(/[A-Za-z0-9\/]+/g, '<span class="text-[41px] font-bold">$&</span>');
        }

        sections.forEach((section) => {
            const el = document.createElement('section');

            const title = document.createElement('h2');
            title.className = 'flex h-10 items-center gap-3 px-[50px] text-[33px] leading-10 font-medium';
            title.innerHTML = `<svg class="h-10 w-10 shrink-0" aria-hidden="true"><use href="#${section.icon}"/></svg>${section.title}`;
            el.appendChild(title);

            const rows = document.createElement('div');
            rows.className = 'mt-10 flex flex-col gap-[38px] overflow-hidden pl-[50px]';

            section.rows.forEach((chips) => {
                const row = document.createElement('div');
                row.className = 'flex gap-[38px]';

                chips.forEach(([icon, label]) => {
                    const chip = document.createElement('button');
                    chip.type = 'button';
                    chip.className = 'flex h-[118px] shrink-0 items-center gap-2.5 rounded-[34px] border-[3px] border-[#d9d7cc] bg-[#fbfaf5] px-[50px] text-[39px] font-medium whitespace-nowrap text-[#262626]';
                    chip.innerHTML = `<svg class="h-12 w-12 shrink-0" aria-hidden="true"><use href="#${icon}"/></svg><span class="pb-1">${formatLabel(label)}</span>`;
                    // 누르면 선택 상태 전환
                    chip.addEventListener('click', () => chip.classList.toggle('border-[#5576ab]'));
                    row.appendChild(chip);
                });

                rows.appendChild(row);
            });

            el.appendChild(rows);
            list.appendChild(el);
        });
    </script>
</body>
</html>
